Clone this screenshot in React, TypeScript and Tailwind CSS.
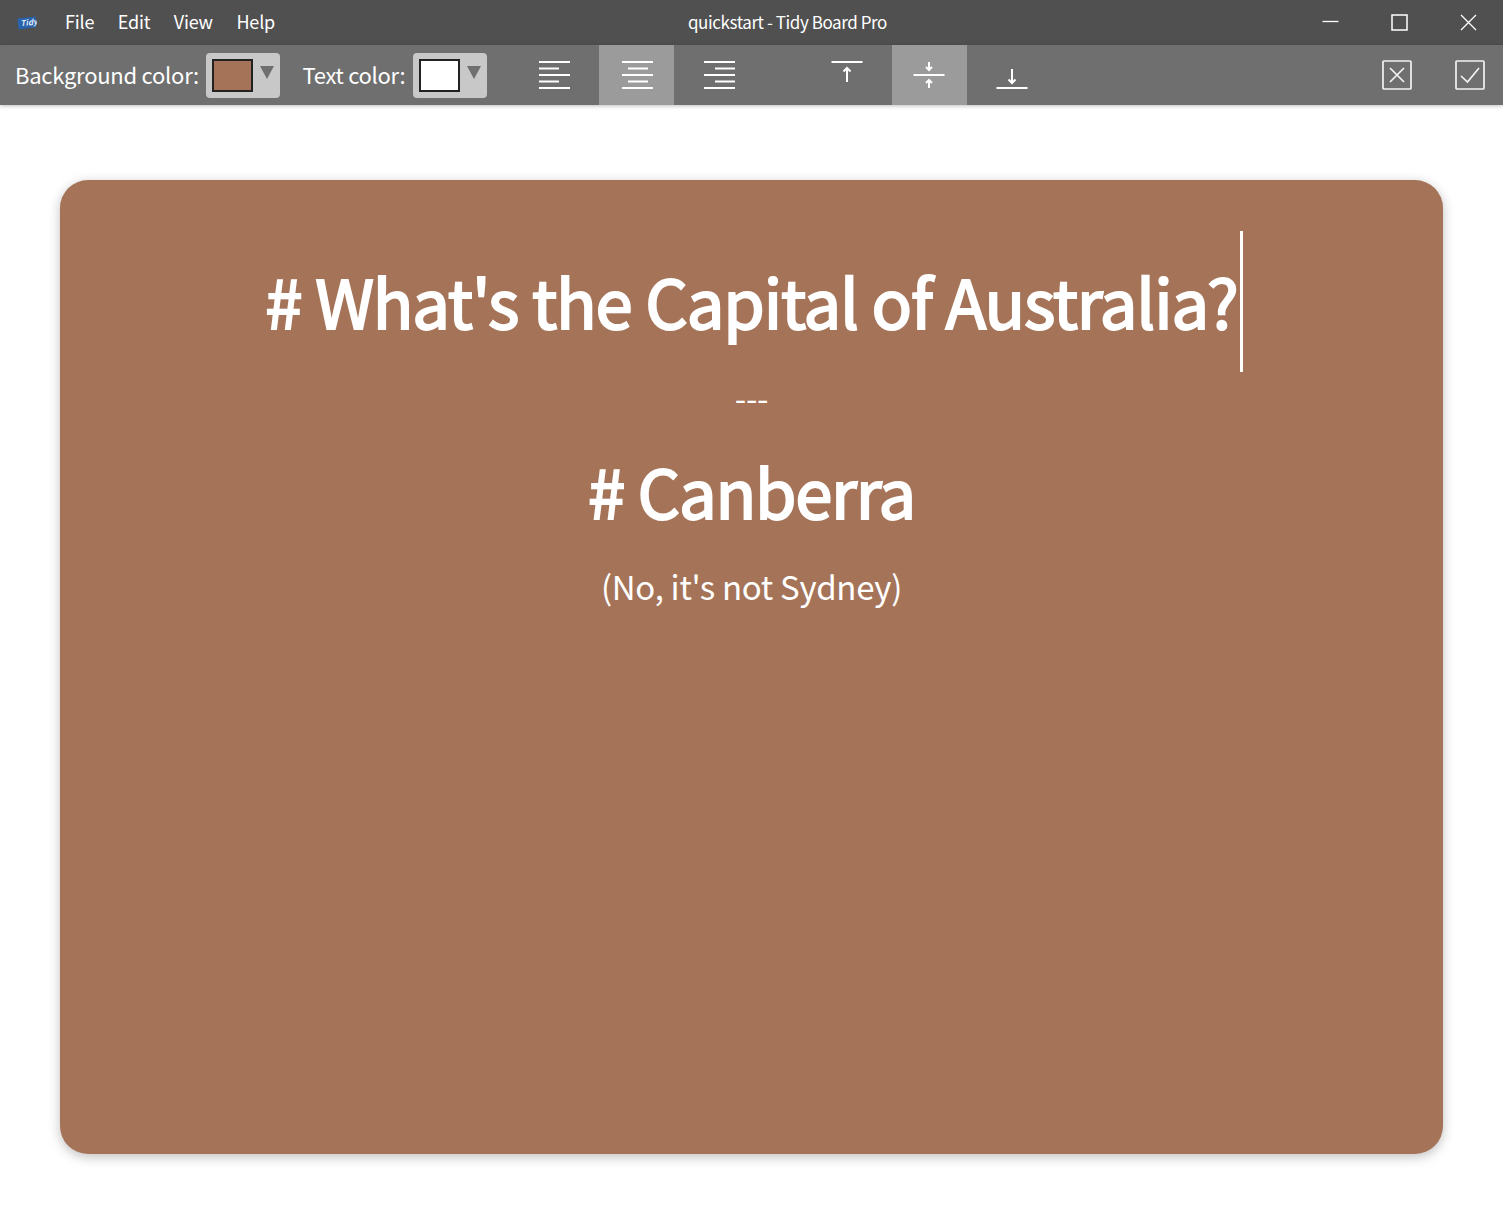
import React from "react";

const font = { fontFamily: '"Noto Sans CJK SC", "Noto Sans", sans-serif' };

const Lines = ({ rows }: { rows: [number, number][] }) => (
  <svg width="32" height="30" viewBox="-1 0 32 30" fill="none" stroke="white" strokeWidth="2">
    {rows.map(([a, b], i) => (
      <path key={i} d={`M${a} ${2 + i * 6.5}H${b}`} />
    ))}
  </svg>
);

const ToolButton = ({ active, children }: { active?: boolean; children: React.ReactNode }) => (
  <div className={`w-[75px] h-[60px] flex items-center justify-center ${active ? "bg-[#9b9b9b]" : ""}`}>
    {children}
  </div>
);

const ColorPicker = ({ color }: { color: string }) => (
  <div className="w-[74px] h-[45px] rounded-[4px] bg-[#c8c8c8] flex items-center pl-[6px]">
    <div className="w-[41px] h-[33px] border-2 border-[#222222]" style={{ backgroundColor: color }} />
    <svg width="14" height="14" viewBox="0 0 14 14" className="ml-[7px] mb-[6px]">
      <path d="M0 1H14L7 14Z" fill="#6f6f6f" />
    </svg>
  </div>
);

export default function App() {
  return (
    <div className="w-[1503px] h-[1213px] bg-white overflow-hidden flex flex-col" style={font}>
      <header className="h-[45px] bg-[#505050] flex items-center text-white text-[18px] relative shrink-0">
        <svg width="20" height="14" viewBox="0 0 20 14" className="ml-[17px]">
          <path d="M0.5 2.5L18.5 0.5L19.5 11L1.5 13.5Z" fill="#2a62ac" />
          <text x="3.5" y="9.5" fontSize="8" fontWeight="700" fontStyle="italic" fill="#dfe8f5" transform="rotate(-6 10 7)">Tidy</text>
        </svg>
        <nav className="flex gap-[23.6px] ml-[28px] pb-[2px] tracking-[-0.2px]">
          <span>File</span>
          <span>Edit</span>
          <span>View</span>
          <span>Help</span>
        </nav>
        <div className="absolute left-[688px] top-0 h-[43px] flex items-center text-[17px] tracking-[-0.42px]">quickstart - Tidy Board Pro</div>
        <div className="ml-auto flex items-center mr-[26px] gap-[52px]">
          <svg width="17" height="17" viewBox="0 0 17 17" stroke="white" fill="none" strokeWidth="1.3">
            <path d="M0.5 7.5H16.5" />
          </svg>
          <svg width="17" height="17" viewBox="0 0 17 17" stroke="white" fill="none" strokeWidth="1.5">
            <rect x="1" y="1" width="15" height="15" />
          </svg>
          <svg width="17" height="17" viewBox="0 0 17 17" stroke="white" fill="none" strokeWidth="1.3">
            <path d="M1 1L16 16M16 1L1 16" />
          </svg>
        </div>
      </header>

      <div className="h-[60px] bg-[#6f6f6f] flex items-center text-white text-[22px] shadow-[0_1px_4px_rgba(0,0,0,0.25)] relative shrink-0">
        <span className="ml-[15px] pb-[2px] tracking-[-0.25px]">Background color:</span>
        <div className="ml-[7px]">
          <ColorPicker color="#a57358" />
        </div>
        <span className="ml-[22.5px] pb-[2px] tracking-[-0.3px] mr-[0.5px]">Text color:</span>
        <div className="ml-[7px]">
          <ColorPicker color="#ffffff" />
        </div>
        <div className="ml-[30px] flex gap-[7.5px]">
          <ToolButton>
            <Lines rows={[[0, 31], [0, 20], [0, 31], [0, 20], [0, 31]]} />
          </ToolButton>
          <ToolButton active>
            <Lines rows={[[0, 31], [6, 26], [0, 31], [6, 26], [0, 31]]} />
          </ToolButton>
          <ToolButton>
            <Lines rows={[[0, 31], [11, 31], [0, 31], [11, 31], [0, 31]]} />
          </ToolButton>
        </div>
        <div className="ml-[52.5px] flex gap-[7.5px]">
          <ToolButton>
            <svg width="32" height="30" viewBox="0 0 32 30" fill="none" stroke="white" strokeWidth="2">
              <path d="M0.5 2H31.5M16 22V8M12.5 11.5L16 8L19.5 11.5" />
            </svg>
          </ToolButton>
          <ToolButton active>
            <svg width="32" height="30" viewBox="0 0 32 30" fill="none" stroke="white" strokeWidth="2">
              <path d="M0.5 15H31.5M16 2V10M13 7L16 10L19 7M16 28V20M13 23L16 20L19 23" />
            </svg>
          </ToolButton>
          <ToolButton>
            <svg width="32" height="30" viewBox="0 0 32 30" fill="none" stroke="white" strokeWidth="2">
              <path d="M0.5 28H31.5M16 9V23M12.5 19.5L16 23L19.5 19.5" />
            </svg>
          </ToolButton>
        </div>
        <div className="ml-auto mr-[18px] flex gap-[43px]">
          <svg width="30" height="30" viewBox="0 0 30 30" fill="none" stroke="#f2f2f2" strokeWidth="1.7">
            <rect x="1" y="1" width="28" height="28" rx="1" />
            <path d="M8 8L22 22M22 8L8 22" />
          </svg>
          <svg width="30" height="30" viewBox="0 0 30 30" fill="none" stroke="#f2f2f2" strokeWidth="1.7">
            <rect x="1" y="1" width="28" height="28" rx="1" />
            <path d="M6 16L12.5 22L24 8" />
          </svg>
        </div>
      </div>

      <main className="flex-1 px-[60px] pt-[75px] pb-[59px]">
        <div className="h-full rounded-[28px] bg-[#a57358] shadow-[0_3px_12px_rgba(0,0,0,0.25)] text-white flex flex-col items-center text-center pt-[51px]">
          <div className="relative h-[141px] text-[67px] leading-[137px] tracking-[-1.18px] [-webkit-text-stroke:2px_white]">
            # What's the Capital of Australia?
            <span className="absolute -right-[5px] top-0 w-[2.5px] h-[141px] bg-white" />
          </div>
          <div className="text-[33px] leading-[48px] tracking-[-0.3px] mt-[1px]">---</div>
          <div className="text-[67px] leading-[100px] tracking-[-1.3px] mt-[19px] [-webkit-text-stroke:2px_white]">
            # Canberra
          </div>
          <div className="text-[33px] leading-[50px] tracking-[-0.3px] mt-[21px]">(No, it's not Sydney)</div>
        </div>
      </main>
    </div>
  );
}
